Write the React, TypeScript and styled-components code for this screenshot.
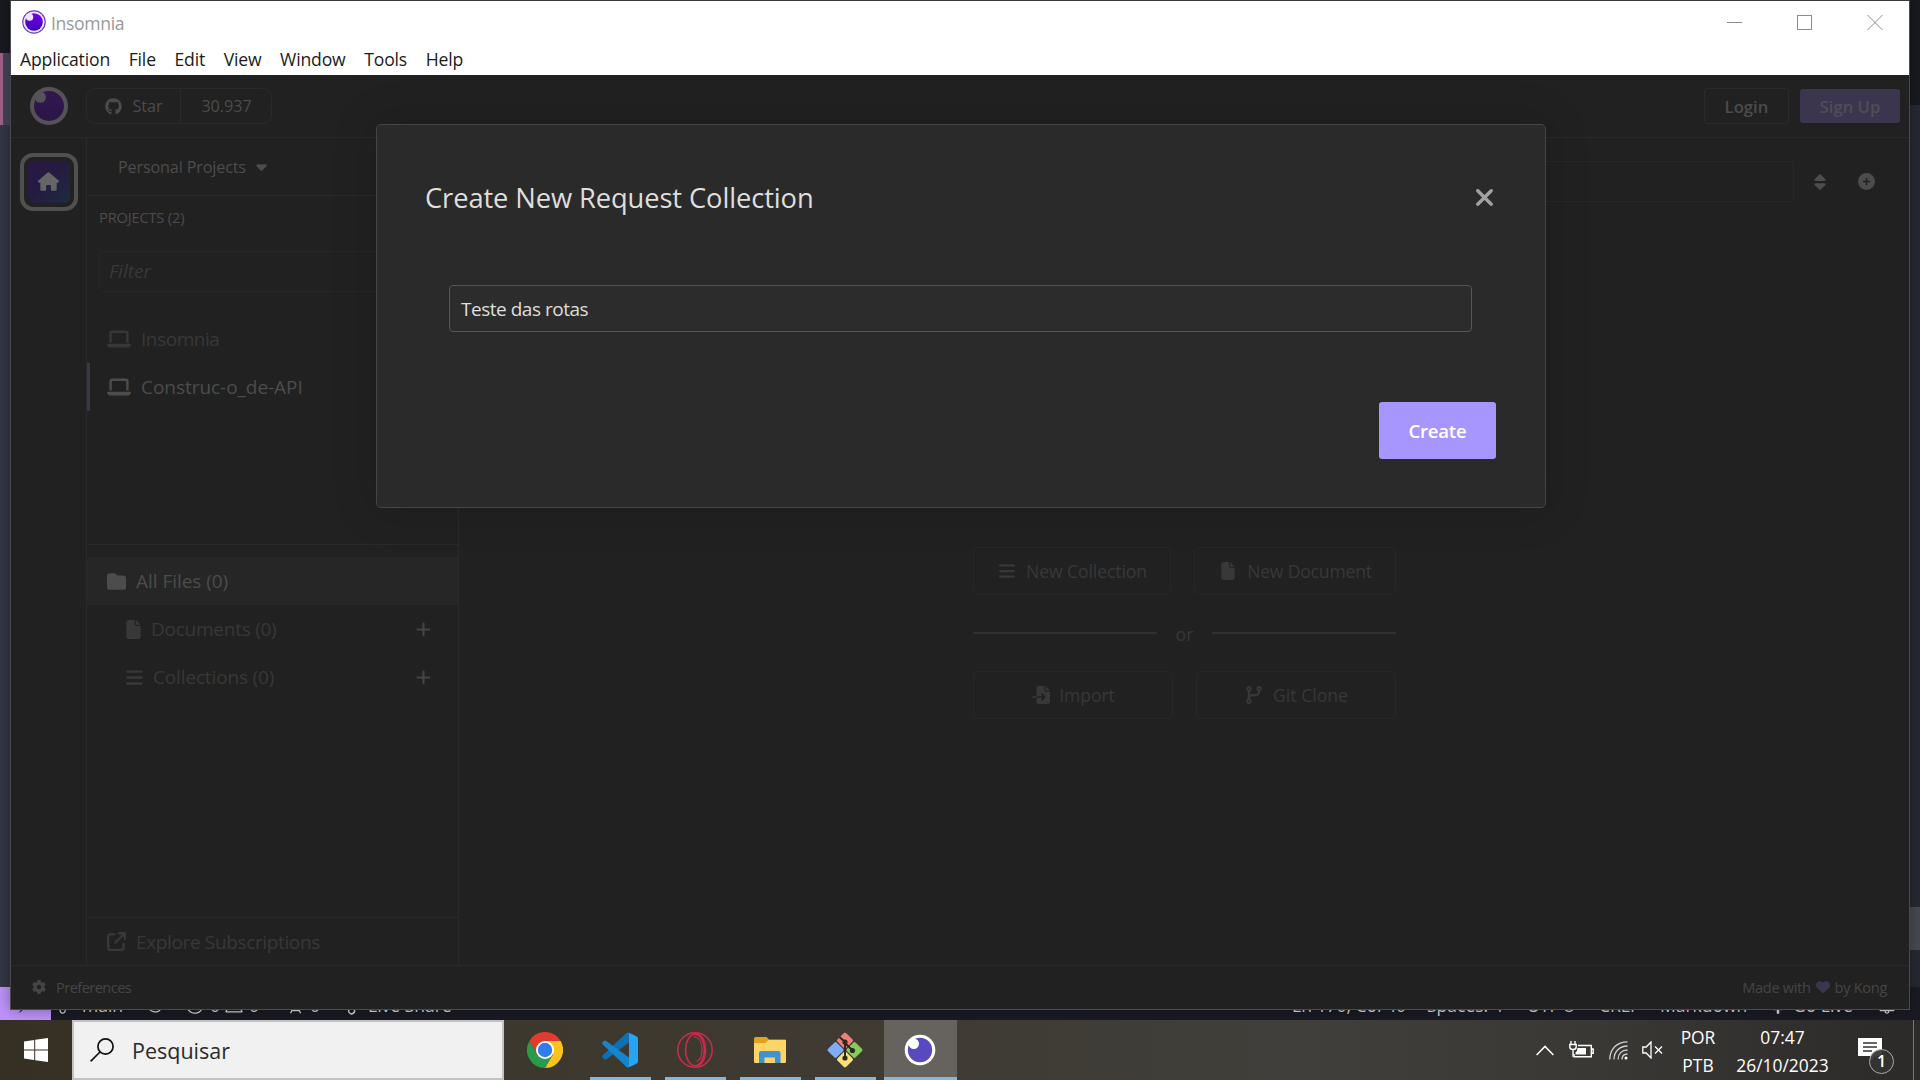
import React from "react";
import styled, { createGlobalStyle } from "styled-components";
import {
  FaGithub,
  FaCaretDown,
  FaLaptop,
  FaFolder,
  FaFile,
  FaBars,
  FaPlus,
  FaFileImport,
  FaCodeBranch,
  FaHouse,
  FaGear,
  FaHeart,
  FaSort,
  FaCirclePlus,
  FaXmark,
  FaArrowUpRightFromSquare,
} from "react-icons/fa6";
import {
  VscRemote,
  VscGitMerge,
  VscSync,
  VscError,
  VscWarning,
  VscRadioTower,
  VscLiveShare,
  VscBell,
  VscBroadcast,
} from "react-icons/vsc";

const GlobalStyle = createGlobalStyle`
  *, *::before, *::after { box-sizing: border-box; }
  html, body { margin: 0; padding: 0; }
  body { width: 1920px; height: 1080px; overflow: hidden; background: #191a21; }
  button { font: inherit; color: inherit; background: none; border: 0; padding: 0; }
  svg { display: block; flex: none; }
`;

const c = {
  bg: "#212121",
  line: "#2a2a2a",
  dim: "#4c4c4c",
  faint: "#383838",
};

/* ---------- Desktop ---------- */

const Desktop = styled.div`
  position: relative;
  width: 1920px;
  height: 1080px;
  display: flex;
  flex-direction: column;
  overflow: hidden;
  font-family: "Open Sans", "Noto Sans", sans-serif;
`;

const Workspace = styled.div`
  position: relative;
  height: 1020px;
  overflow: hidden;
`;

/* ---------- Editor behind the window ---------- */

const Editor = styled.div`
  height: 1020px;
  display: flex;
  flex-direction: column;
  background: #191a21;
`;

const EditorBody = styled.div`
  flex: 1;
  display: flex;
  justify-content: space-between;
`;

const Strip = styled.div`
  width: 11px;
  display: flex;
  flex-direction: column;
`;

const Block = styled.div<{ $h?: number; $c: string; $accent?: boolean }>`
  ${(p) => (p.$h ? `height: ${p.$h}px;` : "flex: 1;")}
  background: ${(p) => p.$c};
  border-left: ${(p) => (p.$accent ? "3px solid #a2638c" : "0")};
`;

const EditorStatus = styled.div`
  height: 33px;
  display: flex;
  align-items: center;
  background: #191a23;
  color: #dcdcd8;
  font-size: 17.5px;
  line-height: 33px;
  white-space: nowrap;
`;

const RemoteButton = styled.div`
  width: 51px;
  height: 33px;
  display: flex;
  align-items: center;
  justify-content: center;
  background: #bd93f9;
  color: #282a36;
`;

const StatusItem = styled.div<{ $ml?: number; $w?: number }>`
  display: flex;
  align-items: center;
  gap: 5px;
  padding-top: 3px;
  margin-left: ${(p) => p.$ml ?? 0}px;
  ${(p) => (p.$w ? `width: ${p.$w}px;` : "")}
`;

const Spacer = styled.div<{ $w?: number }>`
  flex: ${(p) => (p.$w ? `0 0 ${p.$w}px` : "1")};
`;

/* ---------- Window ---------- */

const Window = styled.div`
  position: absolute;
  left: 10px;
  top: 0;
  width: 1900px;
  height: 1010px;
  display: flex;
  flex-direction: column;
  border: 1px solid #4a4a4e;
  border-top-color: #3a3a3a;
  background: ${c.bg};
  box-shadow: 0 0 14px rgba(0, 0, 0, 0.35);
`;

const TitleBar = styled.div`
  height: 38px;
  display: flex;
  align-items: center;
  padding: 4px 0 0 11px;
  background: #fff;
  color: #999;
`;

const WindowTitle = styled.div`
  margin-left: 5px;
  font-size: 17.6px;
  letter-spacing: -0.35px;
  line-height: 24px;
  padding-top: 2px;
`;

const WindowControls = styled.div`
  margin-left: auto;
  padding: 0 26px 0 0;
  display: flex;
  gap: 55px;
`;

const MenuBar = styled.div`
  height: 36px;
  display: flex;
  padding: 8px 0 0 9px;
  gap: 18.6px;
  background: #fff;
  color: #1b1b1b;
  font-size: 17.6px;
  line-height: 24px;
  letter-spacing: -0.16px;
`;

/* ---------- Insomnia header ---------- */

const Header = styled.header`
  height: 63px;
  display: flex;
  align-items: center;
  padding: 0 9px 1px 18px;
  border-bottom: 1px solid ${c.line};
  color: ${c.dim};
`;

const StarBox = styled.div`
  height: 36px;
  width: 186px;
  margin-left: 17px;
  display: flex;
  border: 1px solid ${c.line};
  border-radius: 9px;
  font-size: 16.2px;
  line-height: 34px;
`;

const StarPart = styled.div<{ $w: number; $first?: boolean }>`
  width: ${(p) => p.$w}px;
  display: flex;
  align-items: center;
  justify-content: center;
  gap: 10px;
  padding: 1px 0 0 1px;
  letter-spacing: -0.05px;
  border-right: ${(p) => (p.$first ? `1px solid ${c.line}` : "0")};
`;

const AuthButton = styled.button<{ $primary?: boolean }>`
  height: ${(p) => (p.$primary ? 34 : 36)}px;
  width: ${(p) => (p.$primary ? 100 : 85)}px;
  margin-left: ${(p) => (p.$primary ? "11px" : "auto")};
  padding-top: 2px;
  border: ${(p) => (p.$primary ? "0" : `1px solid ${c.line}`)};
  border-radius: 3px;
  background: ${(p) => (p.$primary ? "#3b364e" : "transparent")};
  color: ${(p) => (p.$primary ? "#504d58" : c.dim)};
  font-size: 16.7px;
  font-weight: 600;
`;

/* ---------- Body ---------- */

const Body = styled.div`
  height: 827px;
  display: flex;
`;

const Rail = styled.nav`
  width: 76px;
  padding: 15px 0 0 9px;
  border-right: 1px solid ${c.line};
`;

const HomeTile = styled.div`
  width: 58px;
  height: 58px;
  padding: 4px;
  border: 4px solid #505050;
  border-radius: 13px;
`;

const HomeFill = styled.div`
  height: 42px;
  display: flex;
  align-items: center;
  justify-content: center;
  padding: 0 1px 2px 0;
  border-radius: 6px;
  background: linear-gradient(135deg, #2a1747 0%, #251b40 45%, #1c2c3c 100%);
  color: #656565;
`;

const Sidebar = styled.aside`
  width: 372px;
  display: flex;
  flex-direction: column;
  border-right: 1px solid ${c.line};
  color: ${c.faint};
`;

const OrgSelect = styled.div`
  height: 58px;
  display: flex;
  align-items: center;
  gap: 7px;
  padding: 0 0 0 31px;
  border-bottom: 1px solid ${c.line};
  color: ${c.dim};
  font-size: 16.2px;
  letter-spacing: -0.16px;
`;

const SectionTitle = styled.div`
  height: 55px;
  padding: 10px 0 0 12px;
  color: ${c.dim};
  font-size: 14.7px;
  line-height: 23px;
  letter-spacing: -0.2px;
`;

const FilterBox = styled.div`
  height: 41px;
  margin: 0 12px;
  padding: 0 9px;
  border: 1px solid #262626;
  border-radius: 3px;
  font-size: 19px;
  font-style: italic;
  line-height: 39px;
`;

const ProjectList = styled.div`
  height: 253px;
  padding-top: 23px;
  border-bottom: 1px solid ${c.line};
`;

const Row = styled.div<{
  $indent?: number;
  $active?: boolean;
  $fill?: boolean;
  $ls?: number;
  $gap?: number;
}>`
  height: 48px;
  display: flex;
  align-items: center;
  gap: ${(p) => p.$gap ?? 10}px;
  padding: 0 26px 0 ${(p) => (p.$indent ?? 20) - (p.$active ? 3 : 0)}px;
  border-left: ${(p) => (p.$active ? "3px solid #3b364e" : "0")};
  background: ${(p) => (p.$fill ? "#262626" : "transparent")};
  color: ${(p) => (p.$active || p.$fill ? c.dim : c.faint)};
  font-size: 19px;
  letter-spacing: ${(p) => p.$ls ?? -0.04}px;
  white-space: nowrap;

  & > svg:last-child:not(:first-child) {
    margin-left: auto;
    color: #444;
  }
`;

const FileList = styled.div`
  flex: 1;
  padding-top: 12px;
`;

const Explore = styled.div`
  height: 48px;
  display: flex;
  align-items: center;
  gap: 10px;
  padding: 0 0 0 20px;
  border-top: 1px solid ${c.line};
  font-size: 19px;
  letter-spacing: -0.36px;
`;

const Main = styled.main`
  flex: 1;
  display: flex;
  flex-direction: column;
  align-items: stretch;
  color: ${c.faint};
`;

const Toolbar = styled.div`
  height: 41px;
  margin-top: 23px;
  display: flex;
  align-items: center;
  padding: 0 34px 0 24px;
  color: ${c.dim};
`;

const SearchBox = styled.div`
  flex: 1;
  height: 41px;
  margin-right: 17px;
  border: 1px solid #272727;
  border-radius: 2px;
`;

const Empty = styled.div`
  width: 423px;
  margin: 345px 0 0 514px;
  display: flex;
  flex-direction: column;
`;

const ButtonRow = styled.div`
  display: flex;
  justify-content: space-between;
`;

const Outline = styled.button<{ $w: number; $gap: number; $ls?: number }>`
  width: ${(p) => p.$w}px;
  height: 48px;
  display: flex;
  align-items: center;
  justify-content: center;
  gap: ${(p) => p.$gap}px;
  padding-left: 1px;
  border: 1px solid #272727;
  border-radius: 4px;
  font-size: 17.6px;
  letter-spacing: ${(p) => p.$ls ?? 0}px;
`;

const Divider = styled.div`
  height: 76px;
  display: flex;
  align-items: center;
  gap: 19px;
  font-size: 17.6px;

  & > span {
    padding-top: 2px;
  }

  &::before,
  &::after {
    content: "";
    flex: 1;
    height: 2px;
    background: #303030;
  }
`;

const Footer = styled.footer`
  flex: 1;
  display: flex;
  align-items: center;
  justify-content: space-between;
  padding: 0 22px 1px 21px;
  border-top: 1px solid ${c.line};
  color: #454545;
`;

const FooterItem = styled.div<{ $gap: number; $ls: number }>`
  display: flex;
  align-items: center;
  gap: ${(p) => p.$gap}px;
  font-size: 14.6px;
  letter-spacing: ${(p) => p.$ls}px;
`;

/* ---------- Dialog ---------- */

const Dialog = styled.section`
  position: absolute;
  left: 365px;
  top: 123px;
  width: 1170px;
  height: 384px;
  display: flex;
  flex-direction: column;
  padding: 0 49px 0 48px;
  border: 1px solid #454545;
  border-radius: 5px;
  background: #2a2a2a;
  color: #dedede;
  box-shadow: 0 0 40px 6px rgba(0, 0, 0, 0.12);
`;

const DialogHead = styled.div`
  height: 148px;
  display: flex;
  align-items: center;
  justify-content: space-between;
  padding-bottom: 3px;
`;

const DialogTitle = styled.h1`
  margin: 0;
  font-size: 27.3px;
  font-weight: 400;
  line-height: 40px;
  letter-spacing: -0.1px;
`;

const CloseButton = styled.button`
  color: #a2a2a2;
  margin-right: -2px;
`;

const NameField = styled.div`
  height: 47px;
  margin: 12px 24px 0 24px;
  padding: 0 11px;
  border: 1px solid #565656;
  border-radius: 4px;
  background: #2c2c2c;
  font-size: 19px;
  line-height: 46px;
  letter-spacing: -0.48px;
`;

const CreateButton = styled.button`
  align-self: flex-end;
  width: 117px;
  height: 57px;
  margin-top: 70px;
  border-radius: 3px;
  background: #a896ff;
  color: #fff;
  font-size: 18.6px;
  font-weight: 600;
  letter-spacing: -0.25px;
`;

/* ---------- Taskbar ---------- */

const Taskbar = styled.div`
  height: 60px;
  display: flex;
  background: linear-gradient(90deg, #362f24 0, #3d382d 500px, #3f3b33 900px, #403f3b 1300px, #393835 1600px, #2b2a29 1920px);
  color: #fff;
`;

const StartButton = styled.div`
  width: 72px;
  display: flex;
  align-items: center;
  justify-content: center;
`;

const SearchField = styled.div`
  width: 432px;
  display: flex;
  align-items: center;
  gap: 18px;
  padding: 0 0 0 16px;
  border: 2px solid #c2c2c2;
  background: #f1f1f1;
  color: #2b2b2b;
  font-size: 21.5px;
`;

const Apps = styled.div`
  display: flex;
  margin-left: 4px;
`;

const AppButton = styled.div<{ $state?: "open" | "active" }>`
  width: ${(p) => (p.$state === "active" ? 73 : 61)}px;
  margin: ${(p) => (p.$state === "active" ? "0 1px" : "0 7px")};
  padding-right: 2px;
  display: flex;
  align-items: center;
  justify-content: center;
  border-top: 3px solid ${(p) => (p.$state === "active" ? "#66635e" : "transparent")};
  border-bottom: 3px solid ${(p) => (p.$state ? "#80b8e2" : "transparent")};
  background: ${(p) => (p.$state === "active" ? "#66635e" : "transparent")};
`;

const Tray = styled.div`
  margin-left: auto;
  display: flex;
  align-items: center;
  font-size: 17.4px;
  line-height: 28px;
  text-align: center;
`;

const TrayText = styled.div<{ $ml: number; $w: number }>`
  margin-left: ${(p) => p.$ml}px;
  width: ${(p) => p.$w}px;
  padding-top: 1px;
  white-space: nowrap;
`;

const TrayIcon = styled.div<{ $ml: number }>`
  margin-left: ${(p) => p.$ml}px;
`;

const Notifications = styled.div`
  position: relative;
  width: 36px;
  height: 36px;
  margin: 12px 0 0 28px;
`;

const Badge = styled.div`
  position: absolute;
  left: 11px;
  top: 11px;
  width: 25px;
  height: 25px;
  border: 1px solid #a9a9a9;
  border-radius: 50%;
  background: rgba(52, 51, 50, 0.93);
  font-size: 16px;
  font-weight: 600;
  line-height: 23px;
`;

const ShowDesktop = styled.div`
  width: 7px;
  height: 60px;
  margin-left: 19px;
  border-left: 1px solid #777;
`;

/* ---------- Drawn icons ---------- */

const TitleLogo = () => (
  <svg width="24" height="24" viewBox="0 0 24 24">
    <defs>
      <linearGradient id="tl" x1="0" y1="0" x2="0" y2="1">
        <stop offset="0" stopColor="#7400e1" />
        <stop offset="1" stopColor="#4000bf" />
      </linearGradient>
    </defs>
    <circle cx="12" cy="12" r="11.8" fill="#6a3fc0" />
    <circle cx="12" cy="12" r="10.6" fill="#efe6fb" />
    <circle cx="12" cy="12" r="8.8" fill="url(#tl)" />
    <circle cx="7.6" cy="7.2" r="3.6" fill="#efe6fb" />
  </svg>
);

const HeaderLogo = () => (
  <svg width="40" height="40" viewBox="0 0 40 40">
    <defs>
      <linearGradient id="hl" x1="0" y1="0" x2="0" y2="1">
        <stop offset="0" stopColor="#32174f" />
        <stop offset="1" stopColor="#2b1547" />
      </linearGradient>
    </defs>
    <circle cx="20" cy="20" r="19.5" fill="#2b2038" />
    <circle cx="20" cy="20" r="19" fill="#565358" />
    <circle cx="20" cy="20" r="15" fill="url(#hl)" />
    <circle cx="11.3" cy="11.2" r="5.6" fill="#565358" />
  </svg>
);

const ChromeIcon = () => (
  <svg width="36" height="36" viewBox="0 0 36 36">
    <path d="M2.4 9A18 18 0 0 1 33.6 9H18L10.2 22.5Z" fill="#e33b2e" />
    <path d="M33.6 9A18 18 0 0 1 18 36L25.8 22.5L18 9Z" fill="#fcc31e" />
    <path d="M2.4 9A18 18 0 0 0 18 36L25.8 22.5H10.2Z" fill="#2b9a4b" />
    <circle cx="18" cy="18" r="9" fill="#fff" />
    <circle cx="18" cy="18" r="7.2" fill="#2f7cee" />
  </svg>
);

const CodeIcon = () => (
  <svg width="36" height="36" viewBox="0 0 36 36">
    <path d="M26 0.6 33.5 4Q36 5 36 7L27 10.5 4.2 27.4Q3 28 1.8 27L0.6 25.6Q-0.4 24.4 0.8 23.2L24.5 1Q25.2 .3 26 .6Z" fill="#0f6fb3" />
    <path d="M26 35.4 33.5 32Q36 31 36 29L27 25.5 4.2 8.9Q3 8 1.8 9L0.6 10.2Q-0.4 11.4 0.8 12.6L24.5 35Q25.2 35.7 26 35.4Z" fill="#1685cc" />
    <path d="M26.2 35.5Q27 34.8 27 33.5V2.5Q27 1.2 26.2 .5L33.8 4Q36 5 36 7.2V28.8Q36 31 33.8 32Z" fill="#27a4f2" />
  </svg>
);

const OperaIcon = () => (
  <svg width="36" height="36" viewBox="0 0 36 36" fill="none" stroke="#cf2a4d">
    <circle cx="18" cy="18" r="17.2" strokeWidth="1.5" />
    <ellipse cx="18" cy="18" rx="9.4" ry="15.8" strokeWidth="1.5" />
    <path d="M18 2.2C25 2.2 28.5 9 28.5 18S25 33.8 18 33.8" strokeWidth="1.4" />
    <path d="M17 4.5C22.5 5.5 25 11.5 25 18S23 28 19.5 29.5" strokeWidth="1.2" />
  </svg>
);

const ExplorerIcon = () => (
  <svg width="34" height="30" viewBox="0 0 34 30">
    <path d="M1 4Q1 2 2.5 2H13.5L16 4.5H32Q33 4.5 33 5.5V9H1Z" fill="#e2a21b" />
    <path d="M1 8H12.5L15.5 5H32Q33 5 33 6V26.5Q33 28 32 28H2Q1 28 1 26.5Z" fill="#fbd568" />
    <path d="M6 28V18Q6 16 8 16H25.5Q27.5 16 27.5 18V28H22V22.5H11.5V28Z" fill="#3f91d4" />
  </svg>
);

const GitIcon = () => (
  <svg width="36" height="36" viewBox="0 0 36 36">
    <g transform="rotate(45 18 18)">
      <rect x="5.2" y="5.2" width="12.2" height="12.2" rx="1.8" fill="#f07e7c" />
      <rect x="18.6" y="5.2" width="12.2" height="12.2" rx="1.8" fill="#86cc5b" />
      <rect x="5.2" y="18.6" width="12.2" height="12.2" rx="1.8" fill="#80adf5" />
      <rect x="18.6" y="18.6" width="12.2" height="12.2" rx="1.8" fill="#fbe07a" />
    </g>
    <g stroke="#2e2a22" strokeWidth="2" fill="#2e2a22">
      <path d="M12.500 5 18 10V26M18 11 25 18" fill="none" />
      <circle cx="18" cy="10" r="1.6" />
      <circle cx="25.500" cy="18.500" r="1.6" />
      <circle cx="18" cy="26" r="1.6" />
    </g>
  </svg>
);

const InsomniaIcon = () => (
  <svg width="32" height="32" viewBox="0 0 32 32">
    <circle cx="16" cy="16" r="15.3" fill="#fff" />
    <circle cx="16" cy="16" r="12.2" fill="#5849be" />
    <circle cx="9.8" cy="9.8" r="5.2" fill="#fff" />
  </svg>
);

const WindowsIcon = () => (
  <svg width="24" height="24" viewBox="0 0 24 24" fill="#fff">
    <path d="M0 3.4 10.2 2V11.4H0ZM11.2 1.8 24 0V11.4H11.2ZM0 12.4H10.2V22L0 20.6ZM11.2 12.4H24V24L11.2 22.2Z" />
  </svg>
);

const SearchIcon = () => (
  <svg width="24" height="24" viewBox="0 0 24 24" fill="none" stroke="#111" strokeWidth="1.7">
    <circle cx="15.5" cy="8.5" r="7.6" />
    <path d="M10 14 .6 23.4" />
  </svg>
);

const ChevronUp = () => (
  <svg width="18" height="11" viewBox="0 0 18 11" fill="none" stroke="#fff" strokeWidth="1.5">
    <path d="M.6 10 9 1.4 17.4 10" />
  </svg>
);

const BatteryIcon = () => (
  <svg width="25" height="18" viewBox="0 0 25 18" fill="none" stroke="#fff" strokeWidth="1.4">
    <path d="M9 4.5H22.3V15.8H5V13M22.3 8H24.2V12.3H22.3" />
    <path d="M8.5 7H17V13.5H6.5V11.5Q8.5 10 8.5 7Z" fill="#fff" stroke="none" />
    <path d="M2 0V3M6 0V3M.8 3.5H7.2V6Q7.2 8.5 4 8.5T.8 6ZM4 8.5V15.8" />
  </svg>
);

const WifiIcon = () => (
  <svg width="19" height="19" viewBox="0 0 19 19" fill="none" stroke="#d0d0d0" strokeWidth="1.3">
    <path d="M.8 18.5C.8 8 8 .8 18.5 .8" />
    <path d="M5 18.5C5 10.5 10.5 5 18.5 5" />
    <path d="M9 18.5C9 12.8 12.8 9 18.5 9" />
    <path d="M13 18.5C13 15 15 13 18.5 13" />
    <circle cx="17" cy="17" r="1.5" fill="#fff" stroke="none" />
  </svg>
);

const MutedIcon = () => (
  <svg width="21" height="18" viewBox="0 0 21 18" fill="none" stroke="#fff" strokeWidth="1.3">
    <path d="M.8 6H4.2L9 1V17L4.2 12H.8ZM13 5.5 20 12.5M20 5.5 13 12.5" />
  </svg>
);

const MessageIcon = () => (
  <svg width="24" height="24" viewBox="0 0 24 24">
    <path d="M0 0H24V18H17L12 24V18H0Z" fill="#fff" />
    <path d="M5 5H19M5 9H19M5 13H14" stroke="#333" strokeWidth="1.5" />
  </svg>
);

const MinimizeIcon = () => (
  <svg width="15" height="15" viewBox="0 0 15 15" stroke="#8c8c8c" strokeWidth="1">
    <path d="M0 7.5H15" />
  </svg>
);
const MaximizeIcon = () => (
  <svg width="15" height="15" viewBox="0 0 15 15" fill="none" stroke="#8c8c8c" strokeWidth="1">
    <rect x=".5" y=".5" width="14" height="14" />
  </svg>
);
const CloseIcon = () => (
  <svg width="16" height="15" viewBox="0 0 16 15" stroke="#8c8c8c" strokeWidth="1">
    <path d="M.5 0 15.5 15M15.5 0 .5 15" />
  </svg>
);

/* ---------- App ---------- */

const menus = ["Application", "File", "Edit", "View", "Window", "Tools", "Help"];

const EditorBehind = () => (
  <Editor>
    <EditorBody>
      <Strip>
        <Block $h={53} $c="#191a21" />
        <Block $h={72} $c="#44465a" $accent />
        <Block $c="#343746" />
      </Strip>
      <Strip>
        <Block $h={105} $c="#191a21" />
        <Block $h={802} $c="#262934" />
        <Block $h={43} $c="#484a53" />
        <Block $c="#262934" />
      </Strip>
    </EditorBody>
    <EditorStatus>
      <RemoteButton><VscRemote size={22} /></RemoteButton>
      <StatusItem $ml={6} $w={88}><VscGitMerge size={20} />main</StatusItem>
      <StatusItem $w={40}><VscSync size={20} /></StatusItem>
      <StatusItem $w={39}><VscError size={20} />0</StatusItem>
      <StatusItem $w={61}><VscWarning size={20} />0</StatusItem>
      <StatusItem $w={58}><VscRadioTower size={20} />0</StatusItem>
      <StatusItem><VscLiveShare size={20} />Live Share</StatusItem>
      <Spacer />
      <StatusItem $w={135}>Ln 170, Col 40</StatusItem>
      <StatusItem $w={100}>Spaces: 4</StatusItem>
      <StatusItem $w={72}>UTF-8</StatusItem>
      <StatusItem $w={61}>CRLF</StatusItem>
      <StatusItem $w={108}>Markdown</StatusItem>
      <StatusItem $w={109}><VscBroadcast size={20} />Go Live</StatusItem>
      <StatusItem $w={43}><VscBell size={20} /></StatusItem>
    </EditorStatus>
  </Editor>
);

export default function App() {
  return (
    <Desktop>
      <GlobalStyle />
      <Workspace>
        <EditorBehind />
        <Window>
          <TitleBar>
            <TitleLogo />
            <WindowTitle>Insomnia</WindowTitle>
            <WindowControls>
              <MinimizeIcon />
              <MaximizeIcon />
              <CloseIcon />
            </WindowControls>
          </TitleBar>
          <MenuBar>
            {menus.map((m) => (
              <span key={m}>{m}</span>
            ))}
          </MenuBar>
          <Header>
            <HeaderLogo />
            <StarBox>
              <StarPart $w={94} $first><FaGithub size={17} />Star</StarPart>
              <StarPart $w={90}>30.937</StarPart>
            </StarBox>
            <AuthButton>Login</AuthButton>
            <AuthButton $primary>Sign Up</AuthButton>
          </Header>
          <Body>
            <Rail>
              <HomeTile>
                <HomeFill><FaHouse size={21} /></HomeFill>
              </HomeTile>
            </Rail>
            <Sidebar>
              <OrgSelect>Personal Projects <FaCaretDown size={17} /></OrgSelect>
              <SectionTitle>PROJECTS (2)</SectionTitle>
              <FilterBox>Filter</FilterBox>
              <ProjectList>
                <Row $ls={-0.45}><FaLaptop size={24} />Insomnia</Row>
                <Row $active><FaLaptop size={24} />Construc-o_de-API</Row>
              </ProjectList>
              <FileList>
                <Row $fill><FaFolder size={19} />All Files (0)</Row>
                <Row $indent={37} $gap={8} $ls={-0.25}><FaFile size={19} />Documents (0)<FaPlus size={17} /></Row>
                <Row $indent={38} $gap={9} $ls={-0.15}><FaBars size={19} />Collections (0)<FaPlus size={17} /></Row>
              </FileList>
              <Explore><FaArrowUpRightFromSquare size={19} />Explore Subscriptions</Explore>
            </Sidebar>
            <Main>
              <Toolbar>
                <SearchBox />
                <FaSort size={18} />
                <Spacer $w={29} />
                <FaCirclePlus size={17} />
              </Toolbar>
              <Empty>
                <ButtonRow>
                  <Outline $w={198} $gap={10} $ls={-0.1}><FaBars size={18} />New Collection</Outline>
                  <Outline $w={202} $gap={10} $ls={-0.2}><FaFile size={18} />New Document</Outline>
                </ButtonRow>
                <Divider><span>or</span></Divider>
                <ButtonRow>
                  <Outline $w={200} $gap={9} $ls={-0.1}><FaFileImport size={18} />Import</Outline>
                  <Outline $w={200} $gap={10}><FaCodeBranch size={18} />Git Clone</Outline>
                </ButtonRow>
              </Empty>
            </Main>
          </Body>
          <Footer>
            <FooterItem $gap={10} $ls={-0.55}><FaGear size={14} />Preferences</FooterItem>
            <FooterItem $gap={5} $ls={-0.32}>Made with <FaHeart size={14} color="#3b364e" /> by Kong</FooterItem>
          </Footer>
          <Dialog>
            <DialogHead>
              <DialogTitle>Create New Request Collection</DialogTitle>
              <CloseButton><FaXmark size={27} /></CloseButton>
            </DialogHead>
            <NameField>Teste das rotas</NameField>
            <CreateButton>Create</CreateButton>
          </Dialog>
        </Window>
      </Workspace>
      <Taskbar>
        <StartButton><WindowsIcon /></StartButton>
        <SearchField><SearchIcon />Pesquisar</SearchField>
        <Apps>
          <AppButton><ChromeIcon /></AppButton>
          <AppButton $state="open"><CodeIcon /></AppButton>
          <AppButton $state="open"><OperaIcon /></AppButton>
          <AppButton $state="open"><ExplorerIcon /></AppButton>
          <AppButton $state="open"><GitIcon /></AppButton>
          <AppButton $state="active"><InsomniaIcon /></AppButton>
        </Apps>
        <Tray>
          <TrayIcon $ml={0}><ChevronUp /></TrayIcon>
          <TrayIcon $ml={15}><BatteryIcon /></TrayIcon>
          <TrayIcon $ml={15}><WifiIcon /></TrayIcon>
          <TrayIcon $ml={14}><MutedIcon /></TrayIcon>
          <TrayText $ml={17} $w={36}>POR<br />PTB</TrayText>
          <TrayText $ml={19} $w={95}>07:47<br />26/10/2023</TrayText>
          <Notifications>
            <MessageIcon />
            <Badge>1</Badge>
          </Notifications>
          <ShowDesktop />
        </Tray>
      </Taskbar>
    </Desktop>
  );
}
